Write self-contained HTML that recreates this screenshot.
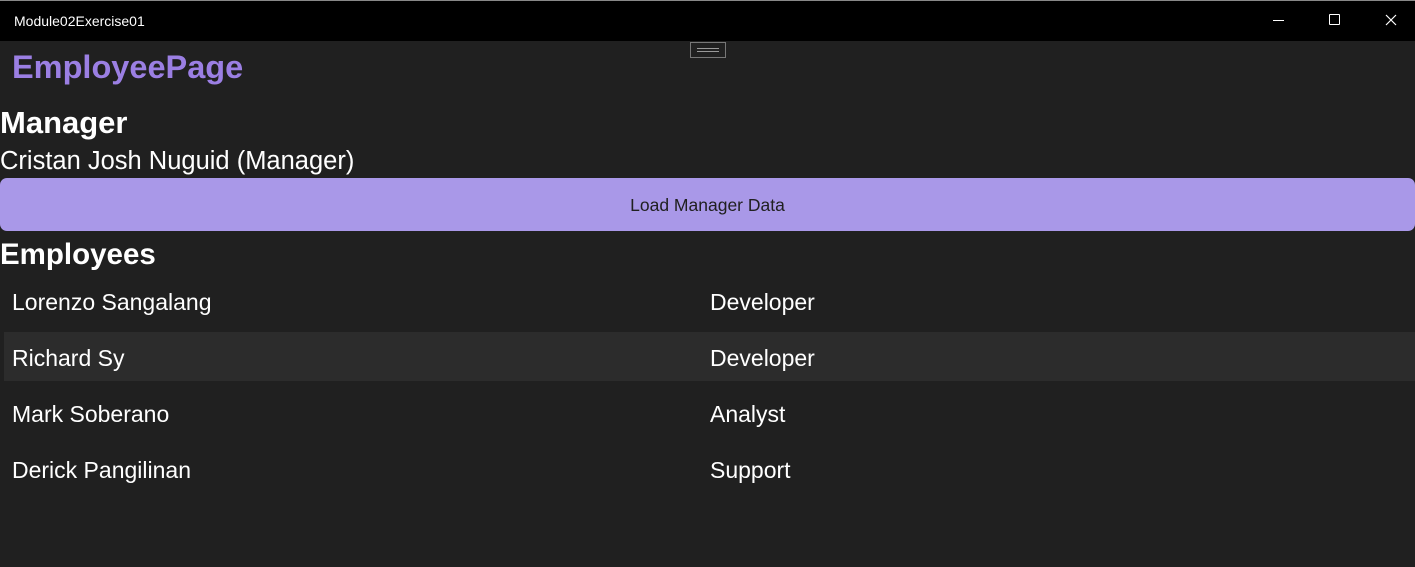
<!DOCTYPE html><html><head><style>
body{margin:0;width:1415px;height:567px;background:#202020;font-family:"Liberation Sans",sans-serif;color:#fff;position:relative;overflow:hidden}
.a{position:absolute;white-space:nowrap}
</style></head><body>
<div class="a" style="left:0;top:0;width:1415px;height:41px;background:#000;border-top:1px solid #888;box-sizing:border-box"></div>
<div class="a" style="left:14px;top:13px;font-size:14px">Module02Exercise01</div>
<div class="a" style="left:1273px;top:20px;width:11px;height:1px;background:#fff"></div>
<div class="a" style="left:1329px;top:14px;width:9px;height:9px;border:1px solid #fff;border-radius:1px"></div>
<svg class="a" style="left:1385px;top:14px" width="12" height="12"><path d="M1 1L11 11M11 1L1 11" stroke="#fff" stroke-width="1.2"/></svg>
<div class="a" style="left:690px;top:42px;width:36px;height:16px;border:1px solid #777;box-sizing:border-box"><div style="margin:5px 6px 0;height:2px;border-top:1px solid #999;border-bottom:1px solid #999"></div></div>
<div class="a" style="left:12px;top:49px;font-size:32.5px;font-weight:bold;color:#9b7fe3">EmployeePage</div>
<div class="a" style="left:0;top:105px;font-size:31px;font-weight:bold">Manager</div>
<div class="a" style="left:0;top:147px;font-size:25.5px">Cristan Josh Nuguid (Manager)</div>
<div class="a" style="left:0;top:178px;width:1415px;height:53px;background:#a998e8;border-radius:7px;color:#202020;font-size:17.5px;text-align:center;line-height:54px">Load Manager Data</div>
<div class="a" style="left:0;top:238px;font-size:29.5px;font-weight:bold">Employees</div>
<div class="a" style="left:4px;top:332px;width:1411px;height:49px;background:#2c2c2c"></div>
<div class="a" style="left:12px;top:288px;font-size:23px;line-height:28px">Lorenzo Sangalang</div><div class="a" style="left:710px;top:288px;font-size:23px;line-height:28px">Developer</div>
<div class="a" style="left:12px;top:344px;font-size:23px;line-height:28px">Richard Sy</div><div class="a" style="left:710px;top:344px;font-size:23px;line-height:28px">Developer</div>
<div class="a" style="left:12px;top:400px;font-size:23px;line-height:28px">Mark Soberano</div><div class="a" style="left:710px;top:400px;font-size:23px;line-height:28px">Analyst</div>
<div class="a" style="left:12px;top:456px;font-size:23px;line-height:28px">Derick Pangilinan</div><div class="a" style="left:710px;top:456px;font-size:23px;line-height:28px">Support</div>
</body></html>
